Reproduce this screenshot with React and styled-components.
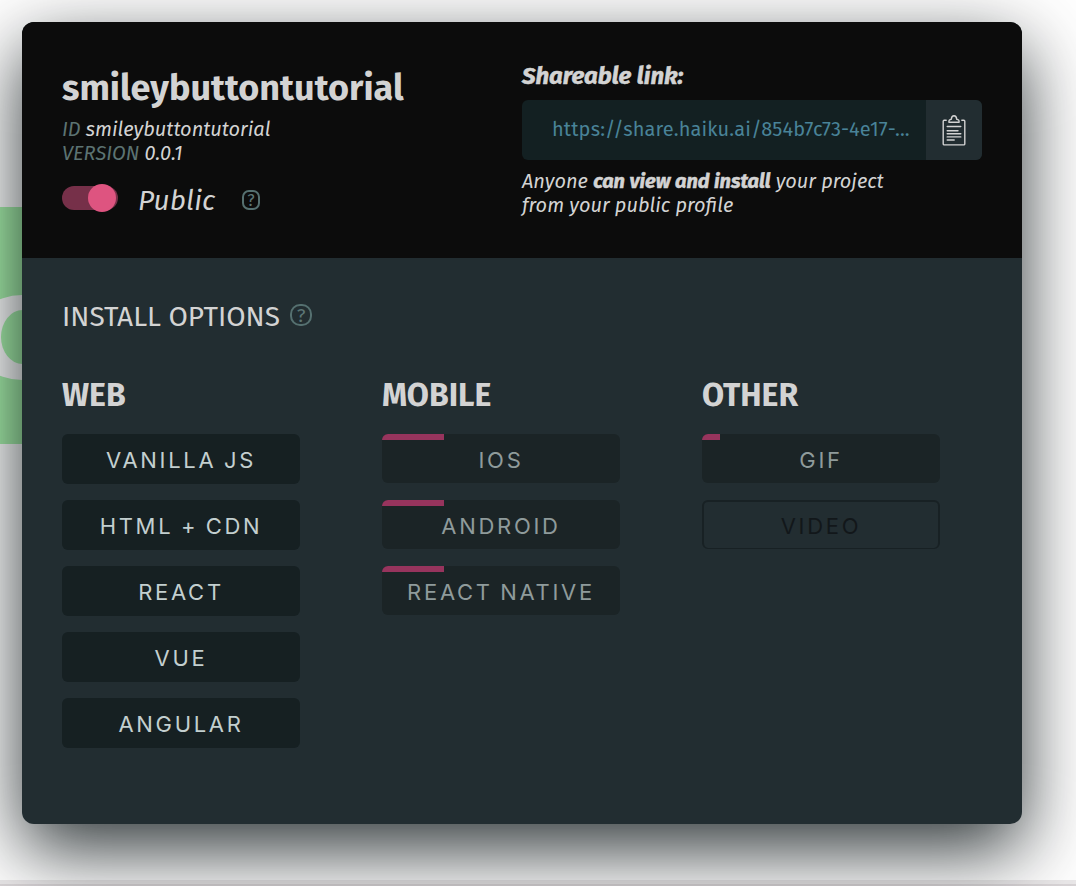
import React from "react";
import styled, { createGlobalStyle } from "styled-components";

const Global = createGlobalStyle`
  *, *::before, *::after { box-sizing: border-box; }
  html, body { margin: 0; padding: 0; }
  body { background: #fff; font-family: "Fira Sans", "Noto Sans", sans-serif; color: #d3d3d3; }
`;

const Page = styled.div`
  position: relative;
  width: 1076px;
  height: 886px;
  padding: 22px;
  overflow: hidden;
  background: #fff;
`;

const Stage = styled.div`
  position: absolute;
  left: 0;
  top: 207px;
  width: 120px;
  height: 237px;
  background: #a9f2ac;
  svg { display: block; }
`;

const FooterEdge = styled.div`
  position: absolute;
  left: 0;
  right: 0;
  bottom: 0;
  height: 6px;
  background: #ebe9ea;
  border-bottom: 2px solid #dad6d8;
`;

const Card = styled.main`
  position: relative;
  width: 1000px;
  height: 802px;
  border-radius: 12px;
  background: #222d31;
  box-shadow: 0 26px 74px rgba(0, 10, 12, 0.82);
`;

const Header = styled.header`
  display: flex;
  height: 236px;
  padding: 40px 40px 0;
  border-radius: 12px 12px 0 0;
  background: #0c0c0c;
`;

const Project = styled.section`
  width: 460px;
  padding-top: 4px;
`;

const Label = styled.div`
  margin: 0;
  white-space: nowrap;
  font-size: ${(p) => p.$size}px;
  line-height: ${(p) => p.$line}px;
  letter-spacing: ${(p) => (p.$track ? `${p.$track}px` : "normal")};
  font-weight: ${(p) => p.$weight || 400};
  font-style: ${(p) => (p.$italic ? "italic" : "normal")};
  -webkit-text-stroke: ${(p) => p.$stroke || 0}px currentColor;
`;

const Meta = styled.div`
  margin-top: 7px;
`;

const Muted = styled.span`
  color: #5c7372;
`;

const Visibility = styled.div`
  display: flex;
  align-items: center;
  height: 32px;
  margin-top: 18px;
`;

const Toggle = styled.div`
  display: flex;
  align-items: center;
  justify-content: flex-end;
  width: 56px;
  height: 24px;
  margin: 0 20px 2px 0;
  padding-right: 2px;
  border-radius: 12px;
  background: #763049;
`;

const Knob = styled.span`
  flex: none;
  width: 28px;
  height: 28px;
  border-radius: 50%;
  background: #de5480;
`;

const VisibilityText = styled.div`
  width: 104px;
  padding-top: 3px;
`;

const Help = styled.span`
  display: flex;
  align-items: center;
  justify-content: center;
  width: ${(p) => p.$w}px;
  height: ${(p) => p.$h}px;
  margin-top: ${(p) => p.$shift || 0}px;
  padding-top: 1px;
  border: 2px solid #557070;
  border-radius: ${(p) => p.$radius}px;
  color: #5c7676;
  font-size: ${(p) => p.$font}px;
  line-height: 1;
`;

const Share = styled.section`
  width: 460px;
`;

const LinkField = styled.div`
  display: flex;
  height: 60px;
  margin-top: 10px;
  border-radius: 6px;
  overflow: hidden;
  background: #132022;
`;

const Url = styled.div`
  flex: 1;
  padding: 17px 0 0 30px;
  color: #498398;
`;

const Copy = styled.button`
  display: flex;
  align-items: center;
  justify-content: center;
  width: 56px;
  padding: 2px 0 0;
  border: 0;
  background: #222d31;
`;

const Note = styled.div`
  margin-top: 9px;
`;

const Strong = styled.b`
  font-weight: 700;
  -webkit-text-stroke: 0.5px currentColor;
`;

const Body = styled.section`
  padding: 39px 40px 0;
`;

const BodyTitle = styled.div`
  display: flex;
  align-items: center;
  height: 36px;
`;

const BodyTitleText = styled.div`
  width: 228px;
  padding-top: 3px;
`;

const Columns = styled.div`
  display: grid;
  grid-template-columns: repeat(3, 238px);
  column-gap: 82px;
  margin-top: 42px;
`;

const Options = styled.div`
  display: grid;
  grid-auto-rows: 50px;
  row-gap: 16px;
  margin-top: 19px;
`;

const Option = styled.button`
  position: relative;
  height: ${(p) => (p.$kind === "ready" ? 50 : 49)}px;
  padding: ${(p) => ({ ready: 2, soon: 3, off: 2 })[p.$kind]}px 0 0;
  border: ${(p) => (p.$kind === "off" ? "2px solid #182124" : "0")};
  border-bottom-width: ${(p) => (p.$kind === "off" ? 1 : 0)}px;
  border-radius: 6px;
  overflow: hidden;
  background: ${(p) => ({ ready: "#162022", soon: "#1b2426", off: "transparent" })[p.$kind]};
  color: ${(p) => ({ ready: "#c3cfcf", soon: "#8f9b9b", off: "#12171a" })[p.$kind]};
  font: 375 22px/26px Inter, sans-serif;
  letter-spacing: 2.7px;
  word-spacing: -1.3px;
  text-align: center;
  white-space: nowrap;
`;

const Progress = styled.span`
  position: absolute;
  left: 0;
  top: 0;
  height: 6px;
  background: #97345d;
`;

const groups = [
  { name: "WEB", items: [["VANILLA JS"], ["HTML + CDN"], ["REACT"], ["VUE"], ["ANGULAR"]] },
  { name: "MOBILE", items: [["IOS", "soon", 62], ["ANDROID", "soon", 62], ["REACT NATIVE", "soon", 62]] },
  { name: "OTHER", items: [["GIF", "soon", 18], ["VIDEO", "off"]] },
];

function ClipboardIcon() {
  return (
    <svg width="24" height="32" viewBox="0 0 24 32" fill="none" stroke="#d3d3d3" strokeWidth="1.4" strokeLinejoin="round" strokeLinecap="round">
      <path d="M4.200 5.200H2.200a1 1 0 0 0-1 1v22.700a1 1 0 0 0 1 1h19.600a1 1 0 0 0 1-1V6.200a1 1 0 0 0-1-1h-2" />
      <path d="M7 7.200c-.5-1.700.6-2.800 2.300-3C9.500 1.700 10.500.7 12 .7s2.500 1 2.700 3.500c1.700.2 2.800 1.300 2.300 3Z" />
      <path d="M5.200 11.500h13.600M5.200 15.800h10.800M5.200 18.800h13.600M5.200 21.900h13.600M5.200 25h7" />
    </svg>
  );
}

export default function App() {
  return (
    <Page>
      <Global />
      <Stage>
        <svg width="120" height="237">
          <ellipse cx="22" cy="130.500" rx="50" ry="42.500" fill="#fff" />
          <ellipse cx="22.500" cy="130" rx="21.500" ry="27" fill="#a9f2ac" />
        </svg>
      </Stage>
      <FooterEdge />
      <Card>
        <Header>
          <Project>
            <Label as="h1" $size={36} $line={44} $weight={700} $track={0.03}>smileybuttontutorial</Label>
            <Meta>
              <Label $size={20} $line={24} $italic><Muted>ID</Muted> smileybuttontutorial</Label>
              <Label $size={20} $line={24} $italic><Muted>VERSION</Muted> 0.0.1</Label>
            </Meta>
            <Visibility>
              <Toggle><Knob /></Toggle>
              <VisibilityText><Label $size={28} $line={32} $track={0.1} $italic>Public</Label></VisibilityText>
              <Help $w={18} $h={20} $shift={2} $radius={7} $font={16}>?</Help>
            </Visibility>
          </Project>
          <Share>
            <Label $size={24} $line={28} $weight={700} $stroke={0.5} $italic>Shareable link:</Label>
            <LinkField>
              <Url><Label $size={20} $line={24} $track={0.15}>https://share.haiku.ai/854b7c73-4e17-...</Label></Url>
              <Copy aria-label="Copy link"><ClipboardIcon /></Copy>
            </LinkField>
            <Note>
              <Label $size={20} $line={24} $italic>Anyone <Strong>can view and install</Strong> your project</Label>
              <Label $size={20} $line={24} $italic>from your public profile</Label>
            </Note>
          </Share>
        </Header>
        <Body>
          <BodyTitle>
            <BodyTitleText><Label $size={28} $line={36}>INSTALL OPTIONS</Label></BodyTitleText>
            <Help $w={22} $h={22} $radius={10} $font={19}>?</Help>
          </BodyTitle>
          <Columns>
            {groups.map((g) => (
              <div key={g.name}>
                <Label $size={32} $line={40} $weight={700}>{g.name}</Label>
                <Options>
                  {g.items.map(([name, kind = "ready", progress]) => (
                    <Option key={name} $kind={kind} disabled={kind === "off"}>
                      {progress && <Progress style={{ width: progress }} />}
                      {name}
                    </Option>
                  ))}
                </Options>
              </div>
            ))}
          </Columns>
        </Body>
      </Card>
    </Page>
  );
}
